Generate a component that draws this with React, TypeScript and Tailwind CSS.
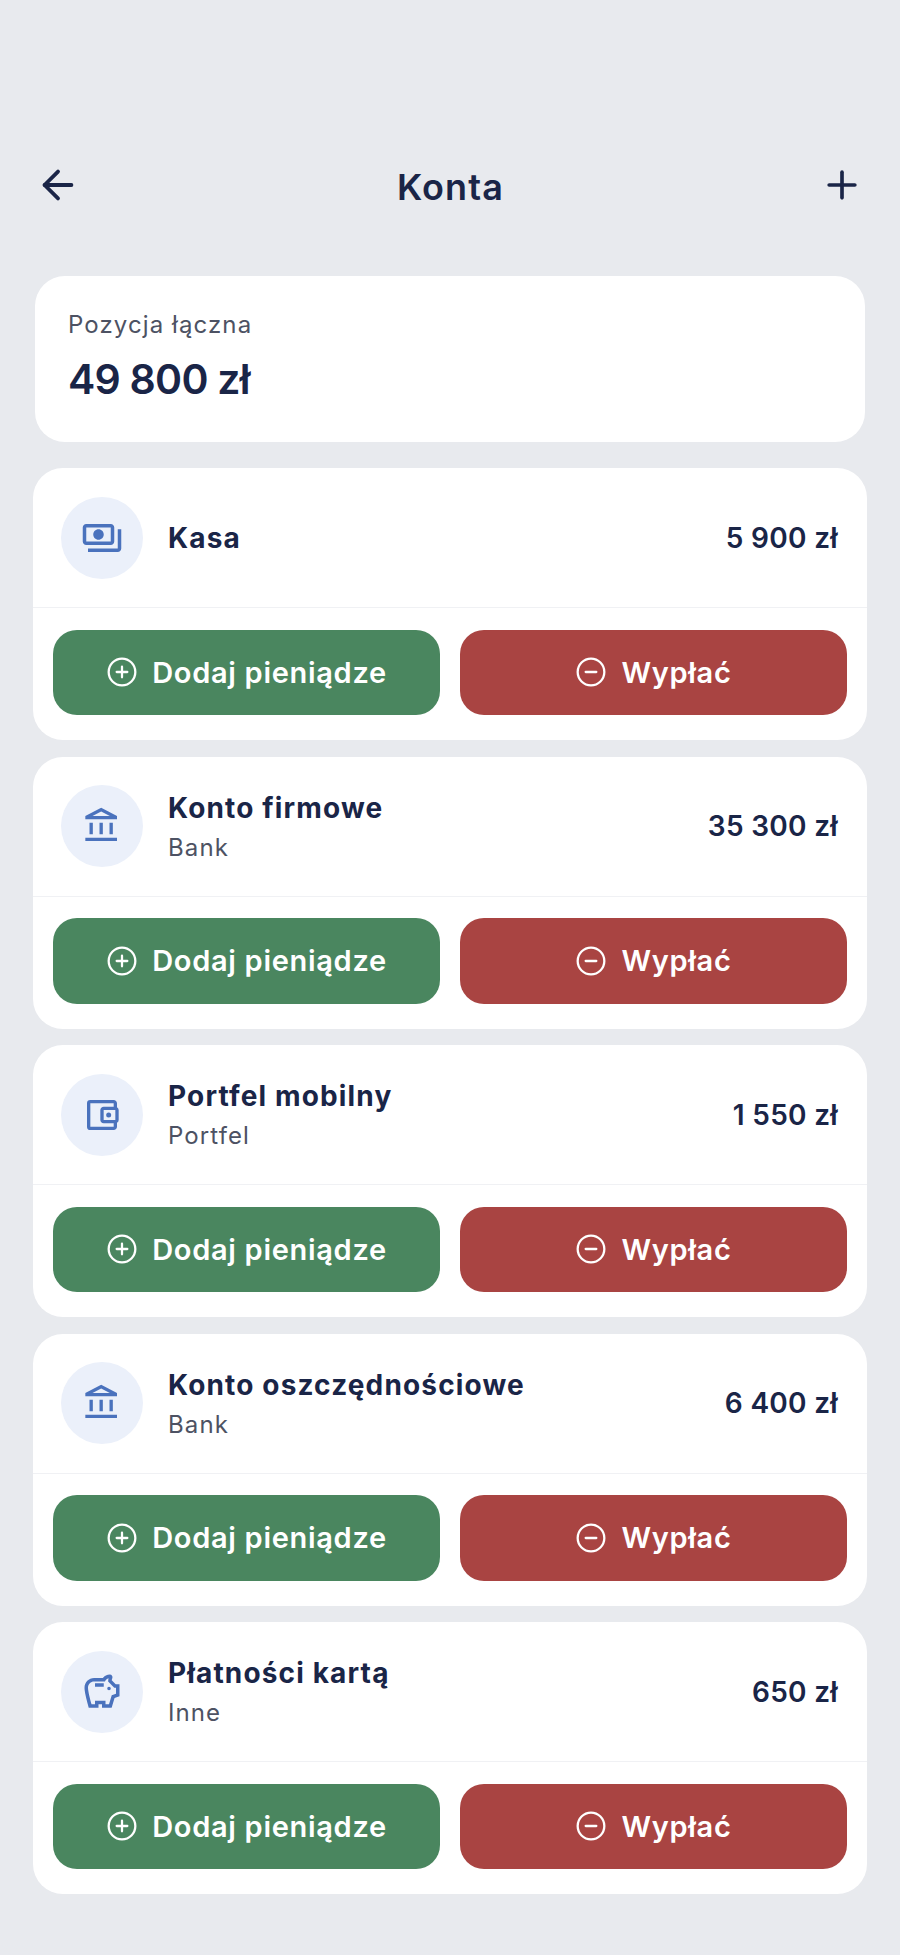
import { ArrowLeft, CircleMinus, CirclePlus, Plus } from 'lucide-react';
import { MdOutlineAccountBalance, MdOutlineAccountBalanceWallet, MdOutlinePayments, MdOutlineSavings } from 'react-icons/md';
import type { IconType } from 'react-icons';

interface Account {
  name: string;
  type?: string;
  amount: string;
  icon: IconType;
  iconSize: string;
}

const ACCOUNTS: Account[] = [
  { name: 'Kasa', amount: '5 900 zł', icon: MdOutlinePayments, iconSize: 'h-[42px] w-[42px]' },
  { name: 'Konto firmowe', type: 'Bank', amount: '35 300 zł', icon: MdOutlineAccountBalance, iconSize: 'h-[40px] w-[40px]' },
  { name: 'Portfel mobilny', type: 'Portfel', amount: '1 550 zł', icon: MdOutlineAccountBalanceWallet, iconSize: 'h-[40px] w-[40px]' },
  { name: 'Konto oszczędnościowe', type: 'Bank', amount: '6 400 zł', icon: MdOutlineAccountBalance, iconSize: 'h-[40px] w-[40px]' },
  { name: 'Płatności kartą', type: 'Inne', amount: '650 zł', icon: MdOutlineSavings, iconSize: 'h-[42px] w-[42px]' },
];

function AccountCard({ account }: { account: Account }) {
  const Icon = account.icon;
  return (
    <div className="h-[272px] rounded-[30px] bg-white">
      <div className="flex h-[140px] items-center border-b border-[#f0f1f4] pl-[28px] pr-[29px]">
        <div className="flex h-[82px] w-[82px] shrink-0 items-center justify-center rounded-full bg-[#ebf0fa]">
          <Icon className={`${account.iconSize} text-[#4a72bd]`} />
        </div>
        <div className="ml-[25px] min-w-0 flex-1">
          <div className="text-[28px] font-bold leading-[36px] tracking-[1.15px] text-[#1a2547]">{account.name}</div>
          {account.type && <div className="mt-[7px] text-[24px] leading-[30px] tracking-[1.1px] text-[#4d5263]">{account.type}</div>}
        </div>
        <div className="text-[28px] font-semibold leading-[36px] tracking-[0.3px] text-[#1a2547]">{account.amount}</div>
      </div>
      <div className="flex gap-[20px] px-[20px] pt-[21.5px]">
        <button className="flex h-[85.5px] flex-1 items-center justify-center gap-[14px] rounded-[24px] bg-[#4a865f] text-[29px] font-semibold tracking-[0.7px] text-white">
          <CirclePlus className="h-[32px] w-[32px]" strokeWidth={1.7} /> Dodaj pieniądze
        </button>
        <button className="flex h-[85.5px] flex-1 items-center justify-center gap-[14px] rounded-[24px] bg-[#a94442] text-[29px] font-semibold tracking-[0.7px] text-white">
          <CircleMinus className="h-[32px] w-[32px]" strokeWidth={1.7} /> Wypłać
        </button>
      </div>
    </div>
  );
}

export default function App() {
  return (
    <div className="min-h-[1955px] bg-[#e8eaee] px-[33px] pt-[157px] font-['Inter',sans-serif]">
      {/* Nagłówek */}
      <div className="flex h-[56px] items-center justify-between pl-[2px] pr-[3px] text-[#1a2547]">
        <ArrowLeft className="h-[46px] w-[46px]" strokeWidth={2} />
        <h1 className="translate-y-[2px] text-[36px] font-semibold tracking-[1.1px]">Konta</h1>
        <Plus className="h-[44px] w-[44px]" strokeWidth={2} />
      </div>

      <div className="mx-[2px] mt-[63px] h-[166px] rounded-[30px] bg-white pl-[33px] pr-[32px] pt-[33px]">
        <div className="text-[24px] leading-[32px] tracking-[1.1px] text-[#4d5263]">Pozycja łączna</div>
        <div className="mt-[13px] text-[41px] font-semibold leading-[50px] tracking-[-0.75px] text-[#1a2547]">49 800 zł</div>
      </div>

      <div className="mt-[26px] flex flex-col gap-[16.5px]">
        {ACCOUNTS.map((a) => (
          <AccountCard key={a.name} account={a} />
        ))}
      </div>
    </div>
  );
}
